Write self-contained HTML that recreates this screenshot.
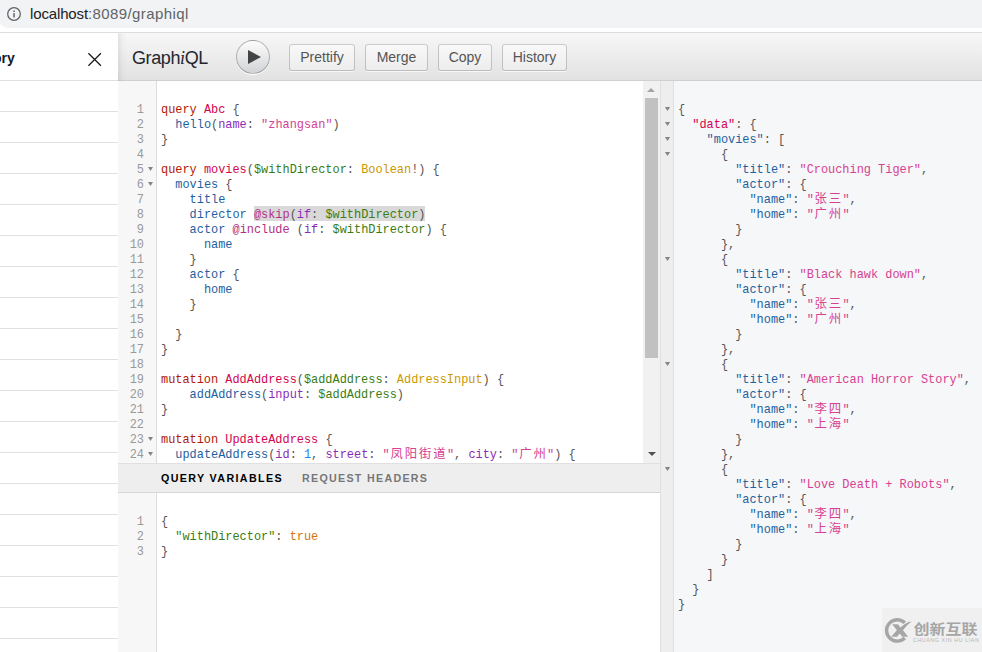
<!DOCTYPE html>
<html lang="zh">
<head>
<meta charset="utf-8">
<title>GraphiQL</title>
<style>
html,body{margin:0;padding:0;}
body{width:982px;height:652px;overflow:hidden;position:relative;background:#fff;
  font-family:"Liberation Sans","Noto Sans CJK SC",sans-serif;font-size:14px;color:#141823;}
*{box-sizing:border-box;}
.abs{position:absolute;}
/* browser url bar */
#url{left:-4px;top:0;width:1040px;height:28px;background:#f1f3f4;border-radius:0 0 14px 14px;}
#urltxt{left:30px;top:4.5px;font-size:15px;line-height:18px;color:#5f6368;white-space:nowrap;letter-spacing:0.4px;}
#urltxt b{font-weight:normal;color:#202124;letter-spacing:-0.14px;}
#sep{left:0;top:32px;width:982px;height:1px;background:#dcdde1;}
/* history pane */
#hist{left:0;top:33px;width:118px;height:619px;background:#fff;}
#histtitle{left:-33.5px;top:50px;font-weight:bold;font-size:14px;line-height:17px;white-space:nowrap;color:#141823;}
.hl{position:absolute;left:0;width:118px;height:1px;background:#e0e0e0;}
#histshadow{left:118px;top:33px;width:9px;height:619px;background:linear-gradient(to right,rgba(0,0,0,.075),rgba(0,0,0,.02) 50%,rgba(0,0,0,0));}
/* top bar */
#topbar{left:118px;top:33px;width:864px;height:48px;background:linear-gradient(#f7f7f7,#e2e2e2);border-bottom:1px solid #d0d0d0;}
#title{left:132px;top:47px;font-size:18px;line-height:22px;white-space:nowrap;color:#23262f;letter-spacing:-0.4px;}
#title em{font-family:"Liberation Serif",serif;font-style:italic;}
#exec{left:236px;top:40px;width:34px;height:34px;border-radius:17px;border:1px solid rgba(0,0,0,.25);
  background:linear-gradient(#fdfdfd,#d2d3d6);box-shadow:0 1px 0 #fff;}
.btn{position:absolute;top:44px;height:27px;border-radius:3px;background:linear-gradient(#f9f9f9,#ececec);
  box-shadow:inset 0 0 0 1px rgba(0,0,0,.20),0 1px 0 rgba(255,255,255,.7),inset 0 1px #fff;
  color:#555;font-size:14px;line-height:26px;text-align:center;white-space:nowrap;}
/* editors */
.cm{position:absolute;overflow:hidden;font-family:"Liberation Mono","Noto Sans CJK SC",monospace;font-size:11.92px;color:#000;}
.gut{position:absolute;left:0;top:0;bottom:0;background:#f7f7f7;border-right:1px solid #ddd;}
.row{position:relative;height:15px;line-height:15px;white-space:pre;}
.row pre{margin:0;font:inherit;position:absolute;top:2px;height:15px;line-height:15px;}
.ln{position:absolute;top:2px;text-align:right;color:#999;}
.fo{position:absolute;top:5.9px;width:5.2px;height:4.1px;background:#858585;clip-path:polygon(0 0,100% 0,50% 100%);}
.zh{font-family:"Noto Sans CJK SC",sans-serif;font-size:12.4px;letter-spacing:1.9px;line-height:0;margin-left:.7px;margin-right:-.7px;}
.k{color:#B11A04}.d{color:#D2054E}.p{color:#555}.pr{color:#1F61A0}.a{color:#8B2BB9}
.s{color:#D64292}.v{color:#397D13}.at{color:#CA9800}.n{color:#2882F9}.b{color:#D47509}.m{color:#B33086}
.sel{position:absolute;top:0;height:15px;left:calc(43px + 13ch);width:24ch;background:#d9d9d9;}
#q{left:118px;top:81px;width:526px;height:382px;background:#fff;}
#q .gut{width:39px;}
#q .lines,#v .lines{position:absolute;left:0;top:20px;width:100%;}
#q .ln,#v .ln{left:0;width:26px;}
#q .fo,#v .fo{left:30px;width:5px;}
#q .row pre,#v .row pre{left:43px;}
#v{left:118px;top:493px;width:543px;height:159px;background:#fff;}
#v .gut{width:39px;}
#r{left:661px;top:81px;width:321px;height:571px;background:#f6f7f8;}
#r .gut{width:13px;background:#eee;border-right:1px solid #e0e0e0;}
#r .lines{position:absolute;left:0;top:20px;width:100%;}
#r .fo{left:3.9px;}
#r .row pre{left:17px;}
#rborder{left:660px;top:81px;width:1px;height:571px;background:#e0e0e0;}
/* scrollbar */
#sb{left:643px;top:81px;width:17px;height:382px;background:#f1f1f1;}
#sbthumb{left:645px;top:98px;width:13px;height:260px;background:#c1c1c1;}
.arrU{position:absolute;width:0;height:0;border-left:4px solid transparent;border-right:4px solid transparent;border-bottom:4px solid #a3a3a3;}
.arrD{position:absolute;width:0;height:0;border-left:4px solid transparent;border-right:4px solid transparent;border-top:4.5px solid #505050;}
/* variable title */
#vt{left:118px;top:463px;width:543px;height:30px;background:#eee;border-top:1px solid #e0e0e0;border-bottom:1px solid #d6d6d6;}
.vtt{position:absolute;top:471px;font-weight:bold;font-size:10.7px;line-height:14px;letter-spacing:1.37px;white-space:nowrap;text-transform:uppercase;}
/* watermark */
#wm{left:882px;top:608px;width:100px;height:44px;background:#f0f0f0;}
#wmt{left:913.5px;top:619px;font-family:"Noto Sans CJK SC","Liberation Sans",sans-serif;font-weight:bold;font-size:16px;line-height:20px;color:#a6a6a6;white-space:nowrap;letter-spacing:0;transform:scaleY(.87);transform-origin:0 0;}
#wms{left:913px;top:636.5px;font-size:5.2px;line-height:7px;color:#b4b4b4;white-space:nowrap;letter-spacing:0.66px;}
</style>
</head>
<body>
<!-- browser chrome -->
<div id="url" class="abs"></div>
<svg class="abs" style="left:6px;top:6px" width="16" height="16" viewBox="0 0 16 16"><circle cx="8" cy="8" r="6.3" fill="none" stroke="#5f6368" stroke-width="1.3"/><rect x="7.3" y="7.1" width="1.5" height="4.3" fill="#5f6368"/><rect x="7.3" y="4.5" width="1.5" height="1.5" fill="#5f6368"/></svg>
<div id="urltxt" class="abs"><b>localhost</b>:8089/graphiql</div>
<div id="sep" class="abs"></div>

<!-- history pane -->
<div id="hist" class="abs"></div>
<div id="histtitle" class="abs">History</div>
<svg class="abs" style="left:86px;top:51px" width="18" height="18" viewBox="0 0 18 18"><path d="M2.4 2.3 L14.9 14.8 M14.9 2.3 L2.4 14.8" stroke="#1a1a1a" stroke-width="1.25" fill="none"/></svg>
<div class="hl" style="top:80px"></div>
<div class="hl" style="top:111px"></div>
<div class="hl" style="top:142px"></div>
<div class="hl" style="top:173px"></div>
<div class="hl" style="top:204px"></div>
<div class="hl" style="top:235px"></div>
<div class="hl" style="top:266px"></div>
<div class="hl" style="top:297px"></div>
<div class="hl" style="top:328px"></div>
<div class="hl" style="top:359px"></div>
<div class="hl" style="top:390px"></div>
<div class="hl" style="top:421px"></div>
<div class="hl" style="top:452px"></div>
<div class="hl" style="top:483px"></div>
<div class="hl" style="top:514px"></div>
<div class="hl" style="top:545px"></div>
<div class="hl" style="top:576px"></div>
<div class="hl" style="top:607px"></div>
<div class="hl" style="top:638px"></div>

<!-- top bar -->
<div id="topbar" class="abs"></div>
<div id="histshadow" class="abs"></div>
<div id="title" class="abs">Graph<em>i</em>QL</div>
<div id="exec" class="abs"><svg width="32" height="32" viewBox="1 1 32 32" style="display:block"><path d="M 12 10 L 25 17 L 12 24 z" fill="#444"/></svg></div>
<div class="btn" style="left:289px;width:66px">Prettify</div>
<div class="btn" style="left:365px;width:63px">Merge</div>
<div class="btn" style="left:438px;width:54px">Copy</div>
<div class="btn" style="left:502px;width:65px">History</div>

<!-- query editor -->
<div id="q" class="cm"><div class="gut"></div><div class="lines">
<div class="row"><span class="ln">1</span><pre><span class="k">query</span> <span class="d">Abc</span> <span class="p">{</span></pre></div>
<div class="row"><span class="ln">2</span><pre>  <span class="pr">hello</span><span class="p">(</span><span class="a">name</span><span class="p">:</span> <span class="s">"zhangsan"</span><span class="p">)</span></pre></div>
<div class="row"><span class="ln">3</span><pre><span class="p">}</span></pre></div>
<div class="row"><span class="ln">4</span><pre> </pre></div>
<div class="row"><span class="ln">5</span><span class="fo"></span><pre><span class="k">query</span> <span class="d">movies</span><span class="p">(</span><span class="v">$withDirector</span><span class="p">:</span> <span class="at">Boolean</span><span class="p">!</span><span class="p">)</span> <span class="p">{</span></pre></div>
<div class="row"><span class="ln">6</span><span class="fo"></span><pre>  <span class="pr">movies</span> <span class="p">{</span></pre></div>
<div class="row"><span class="ln">7</span><pre>    <span class="pr">title</span></pre></div>
<div class="row"><span class="ln">8</span><span class="sel"></span><pre>    <span class="pr">director</span> <span class="m">@skip</span><span class="p">(</span><span class="a">if</span><span class="p">:</span> <span class="v">$withDirector</span><span class="p">)</span></pre></div>
<div class="row"><span class="ln">9</span><pre>    <span class="pr">actor</span> <span class="m">@include</span> <span class="p">(</span><span class="a">if</span><span class="p">:</span> <span class="v">$withDirector</span><span class="p">)</span> <span class="p">{</span></pre></div>
<div class="row"><span class="ln">10</span><pre>      <span class="pr">name</span></pre></div>
<div class="row"><span class="ln">11</span><pre>    <span class="p">}</span></pre></div>
<div class="row"><span class="ln">12</span><pre>    <span class="pr">actor</span> <span class="p">{</span></pre></div>
<div class="row"><span class="ln">13</span><pre>      <span class="pr">home</span></pre></div>
<div class="row"><span class="ln">14</span><pre>    <span class="p">}</span></pre></div>
<div class="row"><span class="ln">15</span><pre> </pre></div>
<div class="row"><span class="ln">16</span><pre>  <span class="p">}</span></pre></div>
<div class="row"><span class="ln">17</span><pre><span class="p">}</span></pre></div>
<div class="row"><span class="ln">18</span><pre> </pre></div>
<div class="row"><span class="ln">19</span><pre><span class="k">mutation</span> <span class="d">AddAddress</span><span class="p">(</span><span class="v">$addAddress</span><span class="p">:</span> <span class="at">AddressInput</span><span class="p">)</span> <span class="p">{</span></pre></div>
<div class="row"><span class="ln">20</span><pre>    <span class="pr">addAddress</span><span class="p">(</span><span class="a">input</span><span class="p">:</span> <span class="v">$addAddress</span><span class="p">)</span></pre></div>
<div class="row"><span class="ln">21</span><pre><span class="p">}</span></pre></div>
<div class="row"><span class="ln">22</span><pre> </pre></div>
<div class="row"><span class="ln">23</span><span class="fo"></span><pre><span class="k">mutation</span> <span class="d">UpdateAddress</span> <span class="p">{</span></pre></div>
<div class="row"><span class="ln">24</span><span class="fo"></span><pre>  <span class="pr">updateAddress</span><span class="p">(</span><span class="a">id</span><span class="p">:</span> <span class="n">1</span><span class="p">,</span> <span class="a">street</span><span class="p">:</span> <span class="s">"<span class="zh">凤阳街道</span>"</span><span class="p">,</span> <span class="a">city</span><span class="p">:</span> <span class="s">"<span class="zh">广州</span>"</span><span class="p">)</span> <span class="p">{</span></pre></div>
</div></div>
<div id="sb" class="abs"></div>
<div id="sbthumb" class="abs"></div>
<div class="arrU" style="left:647px;top:88px"></div>
<div class="arrD" style="left:647.5px;top:452px"></div>

<!-- variables -->
<div id="vt" class="abs"></div>
<div class="vtt" style="left:161px;color:#000">Query Variables</div>
<div class="vtt" style="left:302px;color:#777;letter-spacing:1.29px">Request Headers</div>
<div id="v" class="cm"><div class="gut"></div><div class="lines">
<div class="row"><span class="ln">1</span><pre><span class="p">{</span></pre></div>
<div class="row"><span class="ln">2</span><pre>  <span class="v">"withDirector"</span><span class="p">:</span> <span class="b">true</span></pre></div>
<div class="row"><span class="ln">3</span><pre><span class="p">}</span></pre></div>
</div></div>

<!-- result -->
<div id="r" class="cm"><div class="gut"></div><div class="lines">
<div class="row"><span class="fo"></span><pre><span class="p">{</span></pre></div>
<div class="row"><span class="fo"></span><pre>  <span class="d">"data"</span><span class="p">:</span> <span class="p">{</span></pre></div>
<div class="row"><span class="fo"></span><pre>    <span class="pr">"movies"</span><span class="p">:</span> <span class="p">[</span></pre></div>
<div class="row"><span class="fo"></span><pre>      <span class="p">{</span></pre></div>
<div class="row"><pre>        <span class="pr">"title"</span><span class="p">:</span> <span class="s">"Crouching Tiger"</span><span class="p">,</span></pre></div>
<div class="row"><pre>        <span class="pr">"actor"</span><span class="p">:</span> <span class="p">{</span></pre></div>
<div class="row"><pre>          <span class="pr">"name"</span><span class="p">:</span> <span class="s">"<span class="zh">张三</span>"</span><span class="p">,</span></pre></div>
<div class="row"><pre>          <span class="pr">"home"</span><span class="p">:</span> <span class="s">"<span class="zh">广州</span>"</span></pre></div>
<div class="row"><pre>        <span class="p">}</span></pre></div>
<div class="row"><pre>      <span class="p">},</span></pre></div>
<div class="row"><span class="fo"></span><pre>      <span class="p">{</span></pre></div>
<div class="row"><pre>        <span class="pr">"title"</span><span class="p">:</span> <span class="s">"Black hawk down"</span><span class="p">,</span></pre></div>
<div class="row"><pre>        <span class="pr">"actor"</span><span class="p">:</span> <span class="p">{</span></pre></div>
<div class="row"><pre>          <span class="pr">"name"</span><span class="p">:</span> <span class="s">"<span class="zh">张三</span>"</span><span class="p">,</span></pre></div>
<div class="row"><pre>          <span class="pr">"home"</span><span class="p">:</span> <span class="s">"<span class="zh">广州</span>"</span></pre></div>
<div class="row"><pre>        <span class="p">}</span></pre></div>
<div class="row"><pre>      <span class="p">},</span></pre></div>
<div class="row"><span class="fo"></span><pre>      <span class="p">{</span></pre></div>
<div class="row"><pre>        <span class="pr">"title"</span><span class="p">:</span> <span class="s">"American Horror Story"</span><span class="p">,</span></pre></div>
<div class="row"><pre>        <span class="pr">"actor"</span><span class="p">:</span> <span class="p">{</span></pre></div>
<div class="row"><pre>          <span class="pr">"name"</span><span class="p">:</span> <span class="s">"<span class="zh">李四</span>"</span><span class="p">,</span></pre></div>
<div class="row"><pre>          <span class="pr">"home"</span><span class="p">:</span> <span class="s">"<span class="zh">上海</span>"</span></pre></div>
<div class="row"><pre>        <span class="p">}</span></pre></div>
<div class="row"><pre>      <span class="p">},</span></pre></div>
<div class="row"><span class="fo"></span><pre>      <span class="p">{</span></pre></div>
<div class="row"><pre>        <span class="pr">"title"</span><span class="p">:</span> <span class="s">"Love Death + Robots"</span><span class="p">,</span></pre></div>
<div class="row"><pre>        <span class="pr">"actor"</span><span class="p">:</span> <span class="p">{</span></pre></div>
<div class="row"><pre>          <span class="pr">"name"</span><span class="p">:</span> <span class="s">"<span class="zh">李四</span>"</span><span class="p">,</span></pre></div>
<div class="row"><pre>          <span class="pr">"home"</span><span class="p">:</span> <span class="s">"<span class="zh">上海</span>"</span></pre></div>
<div class="row"><pre>        <span class="p">}</span></pre></div>
<div class="row"><pre>      <span class="p">}</span></pre></div>
<div class="row"><pre>    <span class="p">]</span></pre></div>
<div class="row"><pre>  <span class="p">}</span></pre></div>
<div class="row"><pre><span class="p">}</span></pre></div>
</div></div>
<div id="rborder" class="abs"></div>

<!-- watermark -->
<div id="wm" class="abs"></div>
<svg class="abs" style="left:884px;top:617px" width="30" height="28" viewBox="0 0 30 28"><path d="M20.8 5.8 A10.7 10.7 0 1 0 20.8 21" fill="none" stroke="#a6a6a6" stroke-width="3.4"/><path d="M8.2 7.2 L14 7.2 L16.3 10.4 L20.5 7.2 Q24 5 27.6 4.6 Q22.8 8 18.9 13.2 L24.2 19.8 L18.2 19.8 L15.8 16.4 L13 19.8 L7.2 19.8 L12.9 13.2 Z" fill="#a6a6a6"/></svg>
<div id="wmt" class="abs">创新互联</div>
<div id="wms" class="abs">CHUANG XIN HU LIAN</div>
</body>
</html>
